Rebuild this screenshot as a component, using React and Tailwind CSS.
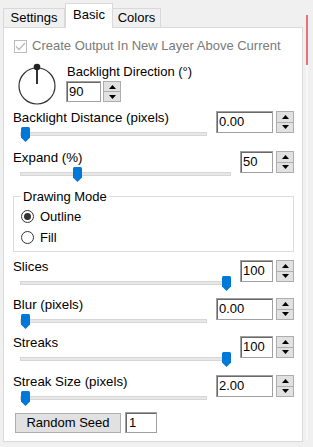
import React from "react";

function Thumb() {
  return (
    <svg width="9" height="15" viewBox="0 0 9 15">
      <path d="M1.5 0 H7.5 Q9 0 9 1.5 V10.5 L4.5 15 L0 10.5 V1.5 Q0 0 1.5 0 Z" fill="#0078d7" />
    </svg>
  );
}

function Arrows() {
  return (
    <div className="flex h-full w-[18px] flex-col border border-[#adadad] bg-[#e1e1e1]">
      <div className="flex flex-1 items-center justify-center border-b border-[#adadad]">
        <svg width="7" height="4" viewBox="0 0 7 4">
          <path d="M0 4 L3.5 0 L7 4 Z" fill="#000" />
        </svg>
      </div>
      <div className="flex flex-1 items-center justify-center">
        <svg width="7" height="4" viewBox="0 0 7 4">
          <path d="M0 0 L7 0 L3.5 4 Z" fill="#000" />
        </svg>
      </div>
    </div>
  );
}

function Spinner({ value, wide }) {
  return (
    <div className="flex h-[22px] gap-[3px]">
      <div
        className={`${wide ? "w-[57px]" : "w-[33px]"} flex items-center border border-[#a0a0a0] bg-white pl-[2px] shadow-[inset_1px_1px_0_#696969]`}
      >
        {value}
      </div>
      <Arrows />
    </div>
  );
}

// label on top, track below, spinner on the right
function SliderRow({ label, value, wide, pct, className }) {
  return (
    <div className={`flex items-start ${className}`}>
      <div className="flex flex-1 flex-col">
        <div className="h-[15px] whitespace-nowrap text-[13.3px] leading-[15px]">{label}</div>
        <div className="relative ml-[7px] mr-[9px] flex h-[18px] items-center">
          <div className="h-[4px] w-full border border-[#d6d6d6] bg-[#e7e7e7]" />
          <div
            className="absolute top-[2px]"
            style={{ left: `calc(1px + ${pct} * (100% - 10px))` }}
          >
            <Thumb />
          </div>
        </div>
      </div>
      <div className="mt-[1px]">
        <Spinner value={value} wide={wide} />
      </div>
    </div>
  );
}

function Radio({ label, checked }) {
  return (
    <div className="flex h-[21px] items-center gap-[6px]">
      <div className="flex h-[13px] w-[13px] items-center justify-center rounded-full border border-[#333] bg-white">
        {checked && <div className="h-[7px] w-[7px] rounded-full bg-[#333]" />}
      </div>
      <span>{label}</span>
    </div>
  );
}

export default function App() {
  return (
    <div className="flex h-[447px] w-[313px] overflow-hidden bg-[#f0f0f0] font-['Liberation_Sans',Arial,sans-serif] text-[13px] text-black">
      <div className="flex w-[303px] flex-col pl-[3px]">
        {/* tabs */}
        <div className="flex h-[27px] items-end">
          <div className="flex h-[19px] w-[62px] items-center justify-center border border-b-0 border-[#d9d9d9] bg-[#f0f0f0]">
            Settings
          </div>
          <div className="relative top-[1px] flex h-[25px] w-[48px] items-center justify-center border border-b-0 border-[#d9d9d9] bg-white pb-[2px]">
            Basic
          </div>
          <div className="flex h-[19px] w-[48px] items-center justify-center border border-b-0 border-l-0 border-[#d9d9d9] bg-[#f0f0f0]">
            Colors
          </div>
        </div>

        {/* panel */}
        <div className="flex h-[415px] w-[300px] flex-col border border-[#d9d9d9] bg-white pl-[9px] pr-[8px]">
          <div className="mt-[11px] flex h-[14px] items-center gap-[5px] text-[#7a7a7a]">
            <div className="ml-[1px] flex h-[13px] w-[13px] shrink-0 items-center justify-center border border-[#bcbcbc] bg-white">
              <svg width="11" height="9" viewBox="0 0 11 9">
                <path d="M1 4.5 L4 7.5 L10 1" fill="none" stroke="#bcbcbc" strokeWidth="1.3" />
              </svg>
            </div>
            <span className="whitespace-nowrap">Create Output In New Layer Above Current</span>
          </div>

          <div className="mt-[9px] flex h-[44px] items-start">
            <svg width="46" height="44" viewBox="0 0 46 44" className="ml-[1px]">
              <circle cx="23" cy="24" r="18" fill="none" stroke="#333" strokeWidth="1.2" />
              <line x1="23" y1="6" x2="23" y2="22" stroke="#333" strokeWidth="2" />
              <circle cx="23" cy="5" r="3.3" fill="#222" />
            </svg>
            <div className="ml-[7px] flex flex-col">
              <div className="mt-[2px] h-[15px] leading-[15px]">Backlight Direction (°)</div>
              <div className="mt-[2px] -ml-[1px]">
                <div className="flex h-[21px] gap-[2px]">
                  <div className="flex w-[35px] items-center border border-[#a0a0a0] bg-white pl-[2px] shadow-[inset_1px_1px_0_#696969]">
                    90
                  </div>
                  <Arrows />
                </div>
              </div>
            </div>
          </div>

          <SliderRow className="mt-[4px]" label="Backlight Distance (pixels)" value="0.00" wide pct={0} />
          <SliderRow className="mt-[7px]" label="Expand (%)" value="50" pct={0.26} />

          <fieldset className="mt-[6px] border border-[#dcdcdc] px-[7px] pb-[3px]">
            <legend className="px-[2px] leading-[15px]">Drawing Mode</legend>
            <div className="mt-[2px]">
              <Radio label="Outline" checked />
              <Radio label="Fill" />
            </div>
          </fieldset>

          <SliderRow className="mt-[7px]" label="Slices" value="100" pct={1} />
          <SliderRow className="mt-[5px]" label="Blur (pixels)" value="0.00" wide pct={0} />
          <SliderRow className="mt-[5px]" label="Streaks" value="100" pct={1} />
          <SliderRow className="mt-[6px]" label="Streak Size (pixels)" value="2.00" wide pct={0} />

          <div className="mt-[5px] flex h-[21px] items-center gap-[4px] pl-[2px]">
            <div className="flex h-[20px] w-[106px] items-center justify-center border border-[#adadad] bg-[#e1e1e1]">
              Random Seed
            </div>
            <div className="flex h-[21px] w-[32px] items-center border border-[#a0a0a0] bg-white pl-[3px] shadow-[inset_1px_1px_0_#696969]">
              1
            </div>
          </div>
        </div>
      </div>

      {/* right edge strip */}
      <div className="ml-[3px] flex w-[2px] flex-col">
        <div className="h-[15px]" />
        <div className="h-[50px] bg-[#e8727a]" />
        <div className="h-[375px] bg-[#f7f7f7]" />
      </div>
    </div>
  );
}
